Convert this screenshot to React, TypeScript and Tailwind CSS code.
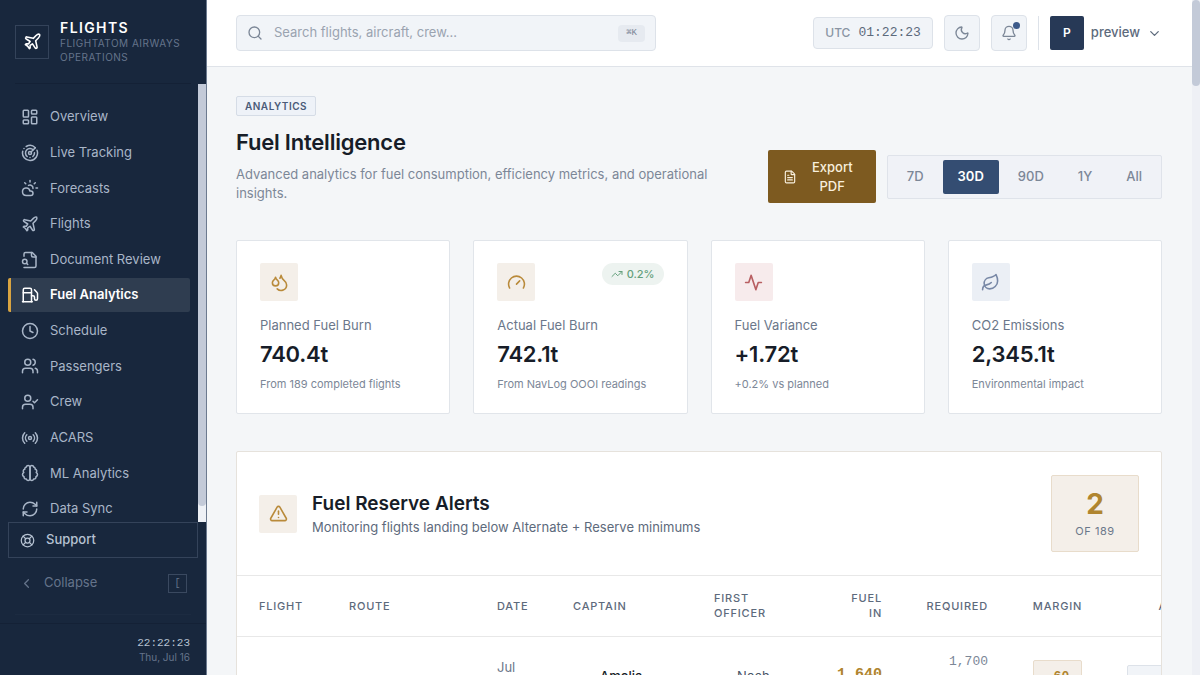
import { useState } from 'react';
import type { ReactNode } from 'react';
import {
  Bell, ChevronDown, ChevronLeft, Clock, CloudSun, Droplets, FileText, Fuel, LayoutDashboard, Leaf,
  LifeBuoy, Moon, Plane, Radar, Radio, RefreshCw, Search, TrendingUp, TriangleAlert, User,
  UserCheck, Users,
} from 'lucide-react';

const MONO = 'font-["Liberation_Mono",monospace]';

function Glyph({ className, children }: { className?: string; children: ReactNode }) {
  return (
    <svg viewBox="0 0 24 24" fill="none" stroke="currentColor" strokeWidth="2" strokeLinecap="round" strokeLinejoin="round" className={className}>
      {children}
    </svg>
  );
}

function DocSearch({ className }: { className?: string }) {
  return (
    <Glyph className={className}>
      <path d="M4 22h14a2 2 0 0 0 2-2V7l-5-5H6a2 2 0 0 0-2 2v3" />
      <path d="M14 2v4a2 2 0 0 0 2 2h4" />
      <circle cx="5" cy="14" r="3" />
      <path d="m9 18-1.5-1.5" />
    </Glyph>
  );
}

function BrainHalves({ className }: { className?: string }) {
  return (
    <Glyph className={className}>
      <path d="M9.5 2A2.5 2.5 0 0 1 12 4.5v15a2.5 2.5 0 0 1-4.96.44 2.5 2.5 0 0 1-2.96-3.08 3 3 0 0 1-.34-5.58 2.5 2.5 0 0 1 1.32-4.24 2.5 2.5 0 0 1 1.98-3A2.5 2.5 0 0 1 9.5 2Z" />
      <path d="M14.5 2A2.5 2.5 0 0 0 12 4.5v15a2.5 2.5 0 0 0 4.96.44 2.5 2.5 0 0 0 2.96-3.08 3 3 0 0 0 .34-5.58 2.5 2.5 0 0 0-1.32-4.24 2.5 2.5 0 0 0-1.98-3A2.5 2.5 0 0 0 14.5 2Z" />
    </Glyph>
  );
}

function Gauge({ className }: { className?: string }) {
  return (
    <Glyph className={className}>
      <path d="m12 14 4-4" />
      <path d="M3.34 19a10 10 0 1 1 17.32 0" />
    </Glyph>
  );
}

function Pulse({ className }: { className?: string }) {
  return (
    <Glyph className={className}>
      <path d="M22 12h-4l-3 9L9 3l-3 9H2" />
    </Glyph>
  );
}

const NAV = [
  { label: 'Overview', icon: LayoutDashboard },
  { label: 'Live Tracking', icon: Radar },
  { label: 'Forecasts', icon: CloudSun },
  { label: 'Flights', icon: Plane },
  { label: 'Document Review', icon: DocSearch },
  { label: 'Fuel Analytics', icon: Fuel },
  { label: 'Schedule', icon: Clock },
  { label: 'Passengers', icon: Users },
  { label: 'Crew', icon: UserCheck },
  { label: 'ACARS', icon: Radio },
  { label: 'ML Analytics', icon: BrainHalves },
  { label: 'Data Sync', icon: RefreshCw },
];

const RANGES = ['7D', '30D', '90D', '1Y', 'All'];

function Sidebar() {
  const [active, setActive] = useState('Fuel Analytics');
  return (
    <aside className="flex w-[207px] shrink-0 flex-col border-r border-[#6c7a8f] bg-[#18273d]">
      <div className="px-[15px]">
        <div className="flex h-[84px] items-center gap-[11px] border-b border-[#142136]">
          <div className="flex h-[34px] w-[34px] shrink-0 items-center justify-center border border-[#34435a]">
            <Plane className="h-[19px] w-[19px] text-white" />
          </div>
          <div>
            <p className="text-[14px] leading-[17px] font-semibold tracking-widest text-white">FLIGHTS</p>
            <p className="text-[10px] leading-[14px] tracking-wider text-[#65748b]">FLIGHTATOM AIRWAYS OPERATIONS</p>
          </div>
        </div>
      </div>

      <div className="flex h-[438px] shrink-0">
        <nav className="min-w-0 flex-1 overflow-hidden pt-4 pr-2 pl-2">
          <ul className="flex h-[426px] flex-col justify-between">
            {NAV.map(({ label, icon: Icon }) => (
              <li key={label}>
                <a href="#" onClick={() => setActive(label)}
                  className={`flex h-[34px] items-center gap-[11px] rounded-xs border-l-3 pl-[10px] text-[13px] ${
                    active === label
                      ? 'border-[#d9a441] bg-[#2f3d50] font-semibold text-white'
                      : 'border-transparent text-[#a9b6c8]'
                  }`}>
                  <Icon className="h-[18px] w-[18px]" />
                  {label}
                </a>
              </li>
            ))}
          </ul>
        </nav>
        <div className="w-2 bg-[#eef1f6]">
          <div className="h-[422px] rounded-b-full bg-[#c3cad8]" />
        </div>
      </div>

      <div className="px-2">
        <a href="#" className="flex h-[36px] items-center gap-[11px] border border-[#34435a] pl-[11px] text-[13px] font-medium text-[#b6c2d2]">
          <LifeBuoy className="h-[15px] w-[15px]" />
          Support
        </a>
      </div>
      <div className="px-[15px]">
        <button type="button" className="flex h-[50px] w-full items-center gap-[10px] px-1 text-[13px] text-[#65748b]">
          <ChevronLeft className="h-[15px] w-[15px]" />
          Collapse
          <kbd className={`ml-auto flex h-[19px] w-[19px] items-center justify-center border border-[#3a4960] text-[10px] ${MONO}`}>[</kbd>
        </button>
        <div className="h-[7px] border-b border-[#1c2b41]" />
      </div>
      <div className="mt-2 flex-1 border-t border-[#142136] pt-3 pr-4 text-right">
        <p className={`text-[11px] leading-[15px] text-[#b6c2d2] ${MONO}`}>22:22:23</p>
        <p className="text-[10px] leading-[12px] text-[#65748b]">Thu, Jul 16</p>
      </div>
    </aside>
  );
}

function TopBar() {
  return (
    <header className="flex h-[67px] shrink-0 items-center justify-between border-b border-[#dfe3e9] bg-white pr-[30px] pl-[29px]">
      <div className="flex h-[36px] w-[420px] items-center gap-[11px] rounded-sm border border-[#dde2e9] bg-[#f1f4f8] px-[10px]">
        <Search className="h-4 w-4 text-[#7c8797]" />
        <input type="search" aria-label="Search" placeholder="Search flights, aircraft, crew..."
          className="min-w-0 flex-1 bg-transparent text-[13px] text-[#4a5668] outline-none placeholder:text-[#9aa3b0]" />
        <kbd className={`rounded-sm bg-[#e6eaf0] px-2 text-[9px] leading-[17px] text-[#7c8797] ${MONO}`}>⌘K</kbd>
      </div>

      <div className="flex items-center gap-[11px]">
        <div className="flex h-8 items-center gap-2 rounded-sm border border-[#dde2e9] bg-[#f1f4f8] px-[11px]">
          <span className="text-[12px] font-medium text-[#8a94a4]">UTC</span>
          <span className={`text-[13px] text-[#5d6a7c] ${MONO}`}>01:22:23</span>
        </div>
        <button type="button" aria-label="Toggle theme" className="flex h-[36px] w-[36px] items-center justify-center rounded-sm border border-[#dde2e9] bg-[#f1f4f8] text-[#7c8797]">
          <Moon className="h-4 w-4" />
        </button>
        <button type="button" aria-label="Notifications" className="relative flex h-[36px] w-[36px] items-center justify-center rounded-sm border border-[#dde2e9] bg-[#f1f4f8] text-[#7c8797]">
          <Bell className="h-4 w-4" />
          <span className="absolute top-1.5 right-1.5 h-[7px] w-[7px] rounded-full bg-[#3d5a8a]" />
        </button>
        <div className="h-[34px] w-px bg-[#dde2e9]" />
        <button type="button" className="flex items-center gap-[7px] text-[13px] font-medium text-[#5d6a7c]">
          <span className="flex h-[34px] w-[34px] items-center justify-center rounded-xs bg-[#273956] text-[12px] font-semibold text-white">P</span>
          preview
          <ChevronDown className="h-[15px] w-[15px]" />
        </button>
      </div>
    </header>
  );
}

function StatCard({ icon, tint, label, value, note, badge }: {
  icon: ReactNode;
  tint: string;
  label: string;
  value: string;
  note: string;
  badge?: string;
}) {
  return (
    <div className="rounded-xs border border-[#e1e5ea] bg-white px-[23px] pt-[22px] pb-[21px]">
      <div className="flex items-start justify-between">
        <div className={`flex h-[38px] w-[38px] items-center justify-center rounded-xs ${tint}`}>{icon}</div>
        {badge && (
          <span className="flex h-[22px] items-center gap-1 rounded-full bg-[#edf3f0] px-[9px] text-[11px] font-medium text-[#64a07c]">
            <TrendingUp className="h-3 w-3" />
            {badge}
          </span>
        )}
      </div>
      <p className="mt-[15px] text-[13px] leading-[19px] text-[#6b778a]">{label}</p>
      <p className="mt-1 text-[22px] leading-[30px] font-semibold tracking-[-0.01em] text-[#171d28]">{value}</p>
      <p className="mt-[7px] text-[11px] leading-[16px] text-[#7c8797]">{note}</p>
    </div>
  );
}

function ReserveTable() {
  const th = 'px-[22px] py-[15px] text-[11px] leading-[15px] font-medium tracking-[0.8px] text-[#5d6a7c]';
  const td = 'px-[22px] py-[15px] text-[13px] leading-[19px]';
  return (
    <div className="overflow-hidden">
      <table className="w-[1022px] table-fixed border-collapse">
        <colgroup>
          <col className="w-[90px]" />
          <col className="w-[148px]" />
          <col className="w-[76px]" />
          <col className="w-[141px]" />
          <col className="w-[112px]" />
          <col className="w-[100px]" />
          <col className="w-[106px]" />
          <col className="w-[95px]" />
          <col className="w-[154px]" />
        </colgroup>
        <thead>
          <tr className="border-y border-[#e8e8e8]">
            <th className={`${th} text-left`}>FLIGHT</th>
            <th className={`${th} text-left`}>ROUTE</th>
            <th className={`${th} text-left`}>DATE</th>
            <th className={`${th} text-left`}>CAPTAIN</th>
            <th className={`${th} text-left`}>FIRST OFFICER</th>
            <th className={`${th} text-right`}>FUEL<br />IN</th>
            <th className={`${th} text-right`}>REQUIRED</th>
            <th className={`${th} text-center`}>MARGIN</th>
            <th className={`${th} text-center`}>ACTION</th>
          </tr>
        </thead>
        <tbody>
          <tr>
            <td className={`${td} font-semibold text-[#171d28]`}>FA189</td>
            <td className={`${td} text-[#5d6a7c]`}>JFK → BOS</td>
            <td className={`${td} text-[#6b778a]`}>Jul<br />16,<br />2026</td>
            <td className={`${td} font-medium text-[#171d28]`}>
              <div className="flex items-center gap-3">
                <User className="h-[15px] w-[15px] text-[#8a94a4]" />
                <span>Amelia<br />Hart</span>
              </div>
            </td>
            <td className={`${td} text-[#4a5668]`}>
              <div className="flex items-center gap-2">
                <User className="h-[15px] w-[15px] text-[#8a94a4]" />
                <span>Noah<br />Reed</span>
              </div>
            </td>
            <td className={`px-[22px] py-[15px] text-right text-[15px] leading-[22px] font-bold text-[#b0852f] ${MONO}`}>1,640<br />kg</td>
            <td className={`${td} text-right text-[#7c8797] ${MONO}`}>
              1,700<br />kg
              <span className="block text-[10px] leading-[15px]">ALT +<br />RES</span>
            </td>
            <td className={`${td} text-center`}>
              <span className={`inline-block rounded-xs border border-[#e8dccb] bg-[#f4efe9] px-3 py-1.5 align-middle font-bold text-[#b0852f] ${MONO}`}>-60<br />kg</span>
            </td>
            <td className={td}>
              <button type="button" className="flex h-[42px] w-[110px] items-center justify-center gap-2 rounded-xs border border-[#dde2e9] bg-[#f1f4f8] text-[12px] leading-[15px] text-[#273956]">
                <FileText className="h-3 w-3" />
                View details
              </button>
            </td>
          </tr>
        </tbody>
      </table>
    </div>
  );
}

export default function App() {
  const [range, setRange] = useState('30D');
  return (
    <div className='flex h-screen overflow-hidden bg-[#f4f6f8] font-["Inter","Liberation_Sans",sans-serif]'>
      <Sidebar />
      <div className="flex min-w-0 flex-1 flex-col">
        <TopBar />
        <main className="min-h-0 flex-1 overflow-hidden pt-[29px] pr-[30px] pl-[29px]">
          <div className="flex items-end justify-between gap-10">
            <div className="min-w-0 flex-1">
              <span className="inline-block rounded-xs border border-[#d5dce6] bg-[#eef2f8] px-2 align-top text-[10px] leading-[18px] font-semibold tracking-wider text-[#4a5b78]">ANALYTICS</span>
              <h1 className="mt-[7px] text-[22px] leading-[30px] font-semibold tracking-[-0.01em] text-[#171d28]">Fuel Intelligence</h1>
              <p className="mt-2 text-[13px] leading-[19px] text-[#7c8797]">
                Advanced analytics for fuel consumption, efficiency metrics, and operational insights.
              </p>
            </div>
            <div className="flex shrink-0 items-center gap-[11px]">
              <button type="button" className="flex h-[53px] w-[108px] items-center gap-[7px] rounded-xs bg-[#7d5a20] px-[15px] text-[13px] leading-[19px] font-medium text-[#f8efdd]">
                <FileText className="h-[14px] w-[14px] shrink-0" />
                <span className="flex-1 text-center">Export PDF</span>
              </button>
              <div className="flex h-[44px] items-center gap-1 rounded-xs border border-[#dfe3ea] bg-[#f0f2f7] px-1">
                {RANGES.map((r) => (
                  <button key={r} type="button" onClick={() => setRange(r)}
                    className={`h-[34px] rounded-xs px-[15px] text-[13px] ${
                      range === r ? 'bg-[#344d72] font-semibold text-white' : 'font-medium text-[#7c8797]'
                    }`}>
                    {r}
                  </button>
                ))}
              </div>
            </div>
          </div>

          <div className="mt-[37px] grid grid-cols-4 gap-[23px]">
            <StatCard icon={<Droplets className="h-[19px] w-[19px] text-[#b98a3a]" />} tint="bg-[#f4efe9]"
              label="Planned Fuel Burn" value="740.4t" note="From 189 completed flights" />
            <StatCard icon={<Gauge className="h-[19px] w-[19px] text-[#b98a3a]" />} tint="bg-[#f4efe9]"
              label="Actual Fuel Burn" value="742.1t" note="From NavLog OOOI readings" badge="0.2%" />
            <StatCard icon={<Pulse className="h-[19px] w-[19px] text-[#b85f62]" />} tint="bg-[#f7ebec]"
              label="Fuel Variance" value="+1.72t" note="+0.2% vs planned" />
            <StatCard icon={<Leaf className="h-[19px] w-[19px] text-[#7888a6]" />} tint="bg-[#ebeff5]"
              label="CO2 Emissions" value="2,345.1t" note="Environmental impact" />
          </div>

          <section className="mt-[37px] rounded-xs border border-[#e6e2dc] bg-white">
            <div className="flex items-center justify-between px-[22px] py-[23px]">
              <div className="flex items-center gap-[15px]">
                <div className="flex h-[38px] w-[38px] items-center justify-center rounded-xs bg-[#f4efe9]">
                  <TriangleAlert className="h-[19px] w-[19px] text-[#b98a3a]" />
                </div>
                <div>
                  <h2 className="text-[19px] leading-[28px] font-semibold text-[#171d28]">Fuel Reserve Alerts</h2>
                  <p className="text-[13px] leading-[19px] text-[#5d6a7c]">Monitoring flights landing below Alternate + Reserve minimums</p>
                </div>
              </div>
              <div className="flex h-[77px] w-[88px] flex-col items-center justify-center rounded-xs border border-[#e8dccb] bg-[#f4efe9]">
                <p className="text-[28px] leading-[34px] font-bold text-[#b0852f]">2</p>
                <p className="text-[11px] leading-[20px] tracking-wider text-[#6b778a]">OF 189</p>
              </div>
            </div>
            <ReserveTable />
          </section>
        </main>
      </div>
      <div className="w-2 shrink-0 bg-[#eef0f5]">
        <div className="h-[86px] rounded-full bg-[#c3cad8]" />
      </div>
    </div>
  );
}
